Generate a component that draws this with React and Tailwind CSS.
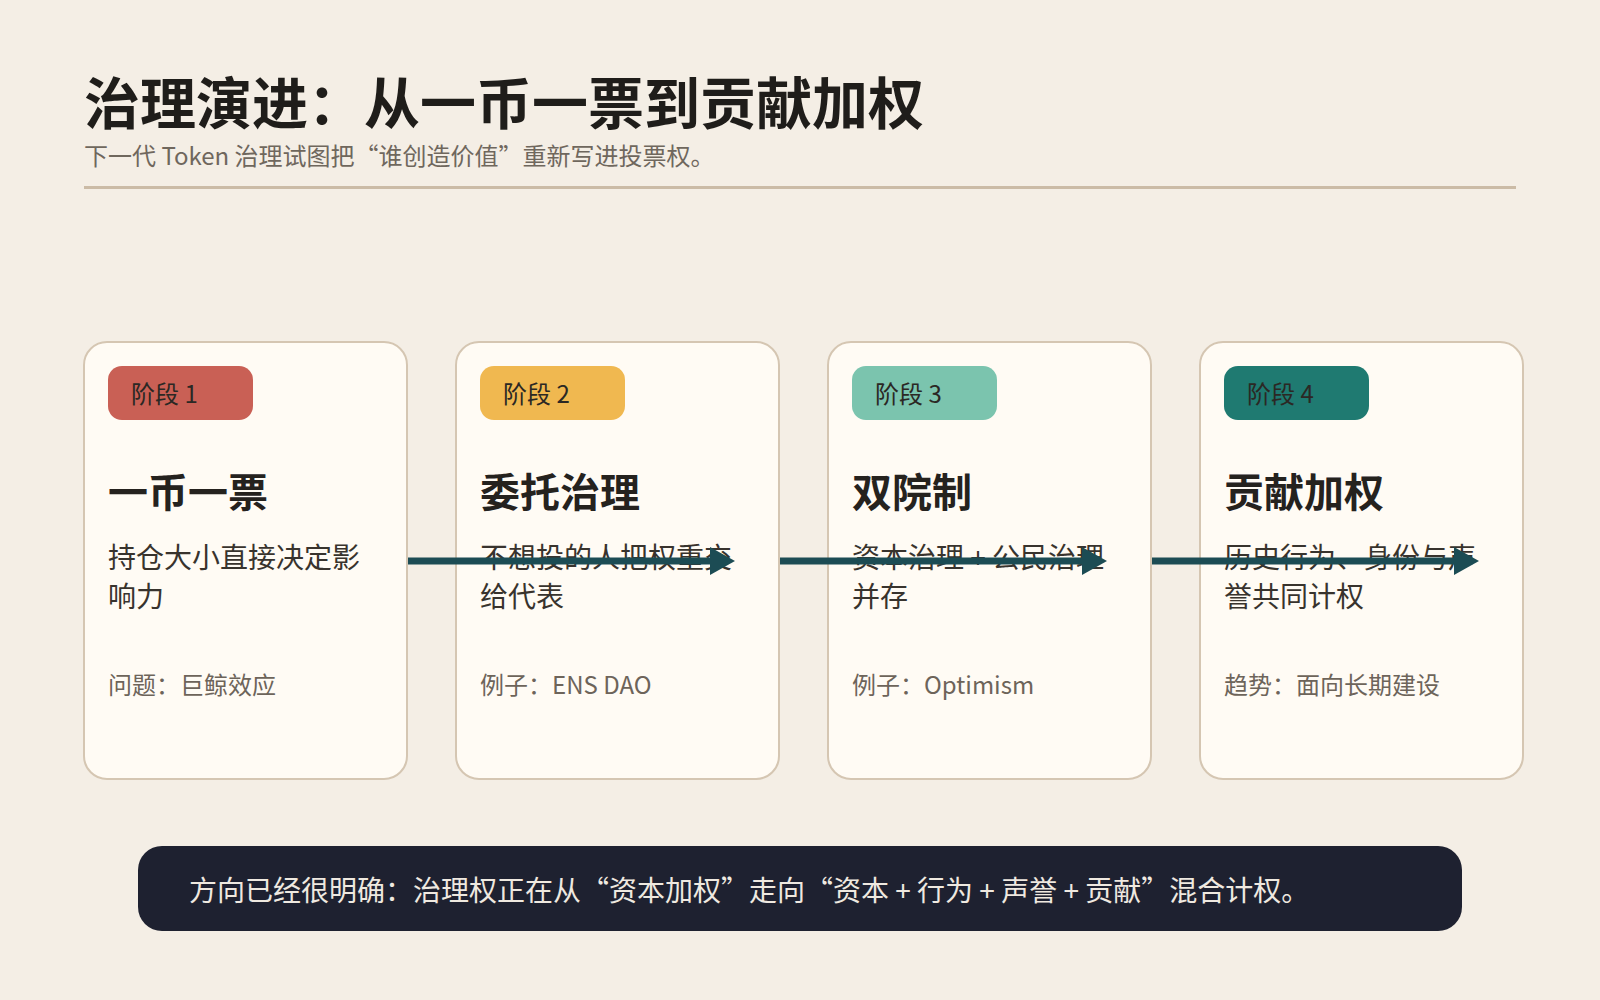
// App.jsx
const stages = [
  {
    badge: "阶段 1",
    color: "bg-[#c96055]",
    title: "一币一票",
    desc: "持仓大小直接决定影响力",
    note: "问题：巨鲸效应",
  },
  {
    badge: "阶段 2",
    color: "bg-[#f0b850]",
    title: "委托治理",
    desc: "不想投的人把权重交给代表",
    note: "例子：ENS DAO",
  },
  {
    badge: "阶段 3",
    color: "bg-[#7bc4ae]",
    title: "双院制",
    desc: "资本治理 + 公民治理并存",
    note: "例子：Optimism",
  },
  {
    badge: "阶段 4",
    color: "bg-[#1f7a71]",
    title: "贡献加权",
    desc: "历史行为、身份与声誉共同计权",
    note: "趋势：面向长期建设",
  },
];

const Arrow = () => (
  // 箭头压在下一张卡片上面
  <svg
    className="absolute left-[calc(100%+2px)] top-[204px] z-10"
    width="327"
    height="28"
    viewBox="0 0 327 28"
  >
    <rect x="0" y="10.5" width="310" height="7" fill="#1c4c54" />
    <polygon points="302,0 327,14 302,28" fill="#1c4c54" />
  </svg>
);

const StageCard = ({ stage, last }) => (
  <div className="relative w-[325px] h-[439px] shrink-0 rounded-3xl border-2 border-[#d5c6b2] bg-[#fffbf4] pt-[23px] px-[23px]">
    <div
      className={`${stage.color} w-[145px] h-[54px] rounded-[14px] flex items-center pl-[23px] text-[24px] text-[#2b2824]`}
    >
      {stage.badge}
    </div>
    <h2 className="mt-[44px] text-[40px] leading-[52px] font-semibold text-[#25221e]">
      {stage.title}
    </h2>
    <p className="mt-[21px] text-[28px] leading-[38.5px] text-[#38332d]">{stage.desc}</p>
    <p className="mt-[54px] text-[24px] leading-[32px] text-[#6d645a]">{stage.note}</p>
    {!last && <Arrow />}
  </div>
);

const App = () => {
  return (
    <div
      className="min-h-screen w-full bg-[#f4eee5] px-[84px] pt-[66px] overflow-hidden"
      style={{ fontFamily: '"Noto Sans CJK SC", "Noto Sans", sans-serif' }}
    >
      <h1 className="text-[56px] leading-[67px] font-semibold text-[#1f1d1a]">
        治理演进：从一币一票到贡献加权
      </h1>
      <p className="mt-[6px] text-[24px] leading-[32px] text-[#6f675d]">
        下一代 Token 治理试图把“谁创造价值”重新写进投票权。
      </p>
      <div className="mt-[15px] h-[3px] bg-[#cbbba6]" />

      <div className="mt-[152px] -ml-px flex gap-[47px]">
        {stages.map((s, i) => (
          <StageCard key={s.badge} stage={s} last={i === stages.length - 1} />
        ))}
      </div>

      <div className="mt-[66px] mx-[54px] h-[85px] rounded-3xl bg-[#1e2130] flex items-center pl-[51px] text-[28px] text-[#efe9e0]">
        方向已经很明确：治理权正在从“资本加权”走向“资本 + 行为 + 声誉 + 贡献”混合计权。
      </div>
    </div>
  );
};

export default App;
